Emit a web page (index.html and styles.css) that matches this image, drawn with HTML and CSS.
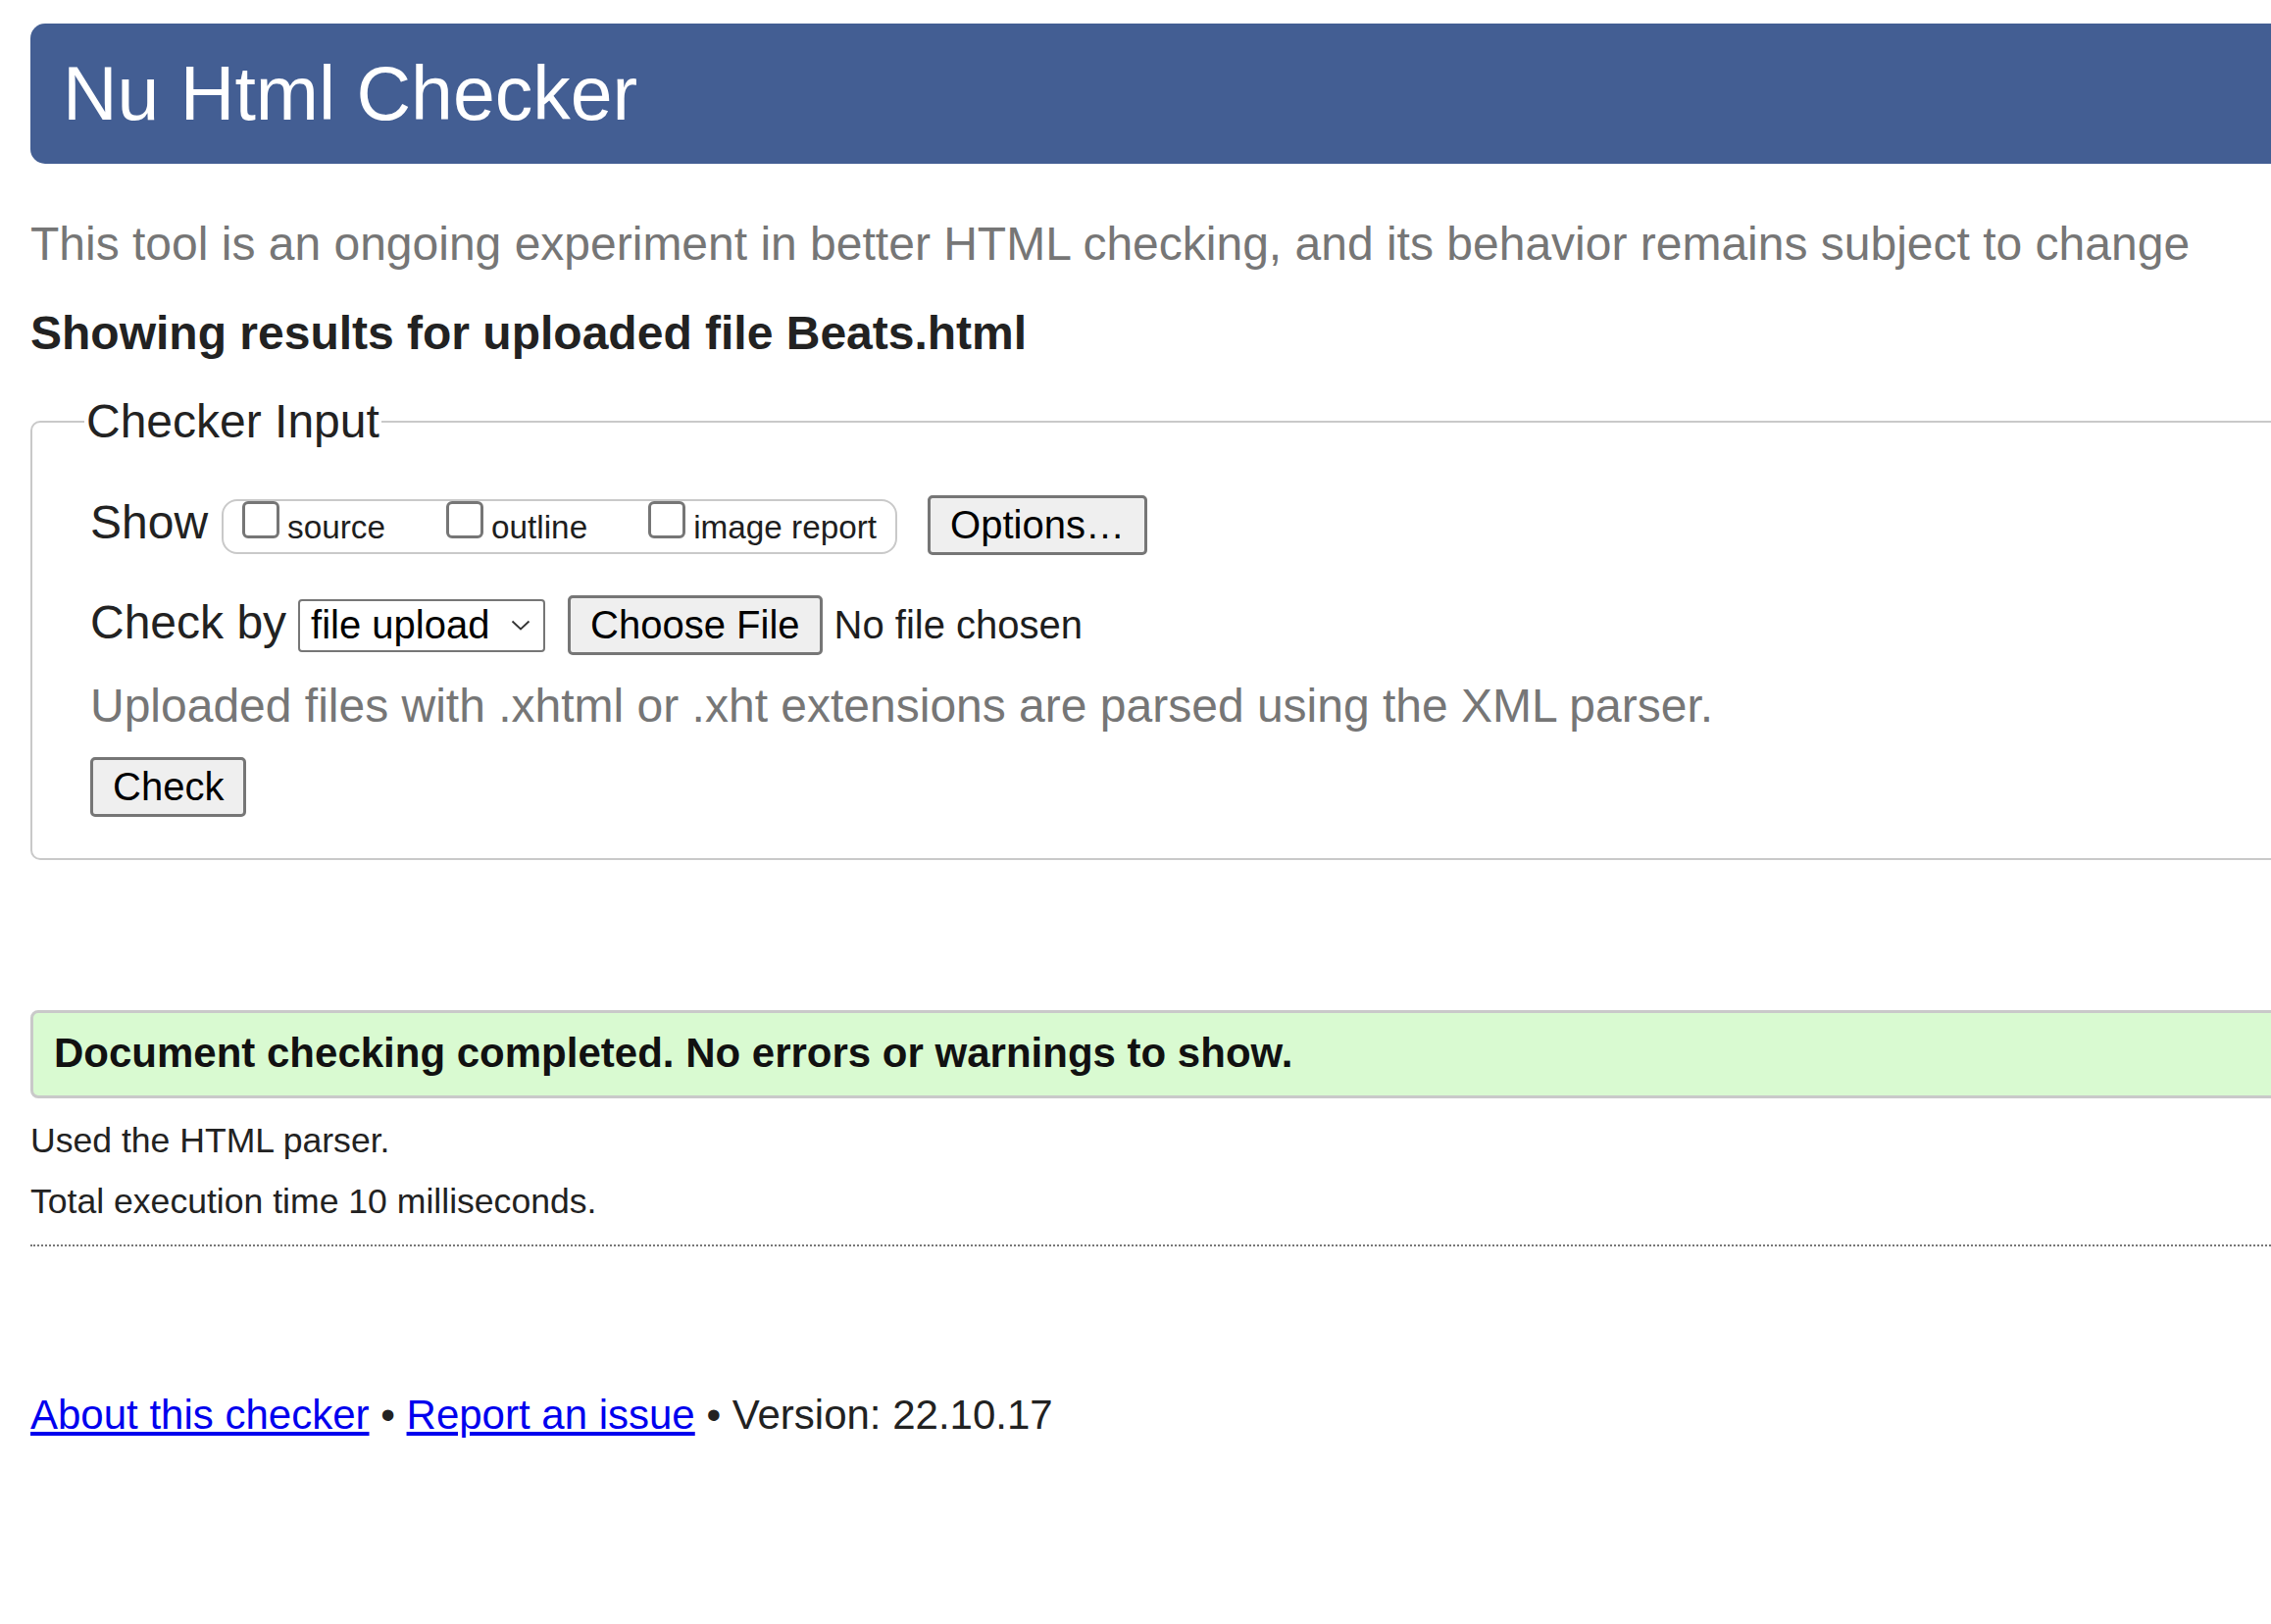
FILE: index.html
```html
<!DOCTYPE html>
<html lang="en">
<head>
<meta charset="utf-8">
<title>Nu Html Checker</title>
<link rel="stylesheet" href="styles.css">
</head>
<body>
<div class="page">
  <h1 class="title">Nu Html Checker</h1>
  <p class="intro">This tool is an ongoing experiment in better HTML checking, and its behavior remains subject to change</p>
  <h2 class="showing">Showing results for uploaded file Beats.html</h2>

  <fieldset class="checker">
    <legend>Checker Input</legend>
    <div class="fs-body">
      <div class="row">
        <span class="row-label">Show</span>
        <div class="group">
          <label class="opt"><input type="checkbox"><span>source</span></label>
          <label class="opt"><input type="checkbox"><span>outline</span></label>
          <label class="opt"><input type="checkbox"><span>image report</span></label>
        </div>
        <button class="btn btn-options" type="button">Options…</button>
      </div>
      <div class="row row2">
        <span class="row-label">Check by</span>
        <div class="select">
          <span>file upload</span>
          <svg class="chev" width="20" height="11" viewBox="0 0 20 11"><polyline points="1.5,1.5 10,9.5 18.5,1.5" fill="none" stroke="#333" stroke-width="1.8"/></svg>
        </div>
        <button class="btn btn-file" type="button">Choose File</button>
        <span class="nofile">No file chosen</span>
      </div>
      <p class="note">Uploaded files with .xhtml or .xht extensions are parsed using the XML parser.</p>
      <button class="btn btn-check" type="button">Check</button>
    </div>
  </fieldset>

  <div class="success">Document checking completed. No errors or warnings to show.</div>
  <p class="meta meta1">Used the HTML parser.</p>
  <p class="meta meta2">Total execution time 10 milliseconds.</p>
  <hr class="dotted">

  <p class="footer"><a href="#">About this checker</a> • <a href="#">Report an issue</a> • Version: 22.10.17</p>
</div>
</body>
</html>
```

FILE: styles.css
```css
html {
  background: #ffffff;
}

body {
  margin: 0;
  overflow-x: hidden;
  font-family: "Liberation Sans", Arial, sans-serif;
  color: #222222;
}

.page {
  margin: 24px -80px 0 31px;
}

.title {
  margin: 0;
  padding: 27px 32px 27px 33px;
  background: #435e93;
  color: #ffffff;
  font-size: 77px;
  font-weight: normal;
  line-height: normal;
  border-radius: 15px 0 0 15px;
}

.intro {
  margin: 54px 0 0 0;
  font-size: 48px;
  color: #767676;
  white-space: nowrap;
}

.showing {
  margin: 36px 0 0 0;
  font-size: 48px;
  font-weight: bold;
  color: #222222;
}

.checker {
  margin: 35px 0 0 0;
  padding: 48px 0 42px 53px;
  border: 2px solid #c9c9c9;
  border-radius: 10px;
  min-inline-size: 0;
}

.checker legend {
  padding: 0 2px;
  font-size: 48px;
  color: #222222;
}

.fs-body {
  padding-left: 6px;
}

.row {
  display: flex;
  align-items: baseline;
}

.row-label {
  font-size: 48px;
  color: #222222;
}

.group {
  display: flex;
  align-items: baseline;
  gap: 62px;
  margin-left: 14px;
  padding: 0 19px 6px 19px;
  border: 2px solid #c9c9c9;
  border-radius: 16px;
}

.opt {
  display: flex;
  align-items: baseline;
  gap: 8px;
  font-size: 33.3px;
  color: #1e1e1e;
}

.opt input {
  appearance: none;
  -webkit-appearance: none;
  box-sizing: border-box;
  width: 38px;
  height: 38px;
  margin: 0;
  border: 3px solid #767676;
  border-radius: 6px;
  background: #ffffff;
}

.btn {
  font-family: "Liberation Sans", Arial, sans-serif;
  font-size: 40px;
  line-height: normal;
  color: #000000;
  background: #efefef;
  border: 3px solid #767676;
  border-radius: 5px;
  padding: 5px 20px;
  margin: 0;
}

.btn-options {
  margin-left: 31px;
}

.row2 {
  margin-top: 41px;
}

.select {
  display: flex;
  align-items: baseline;
  box-sizing: border-box;
  width: 252px;
  margin-left: 12px;
  padding: 2px 13px 3px 11px;
  border: 2px solid #767676;
  border-radius: 4px;
  font-size: 40px;
  color: #000000;
}

.select .chev {
  margin-left: auto;
  align-self: center;
}

.btn-file {
  margin-left: 23px;
}

.nofile {
  margin-left: 12px;
  font-size: 40px;
  color: #1e1e1e;
}

.note {
  margin: 24px 0 0 0;
  font-size: 48px;
  color: #767676;
}

.btn-check {
  margin-top: 25px;
  display: block;
}

.success {
  margin-top: 153px;
  padding: 17px 18px 19px 21px;
  border: 3px solid #c9c9c9;
  border-radius: 8px;
  background: #d9fad1;
  font-size: 42px;
  font-weight: bold;
  color: #111111;
}

.meta {
  margin: 0;
  font-size: 35.6px;
  color: #222222;
}

.meta1 {
  margin-top: 23px;
}

.meta2 {
  margin-top: 21px;
}

.dotted {
  margin: 23px 0 0 0;
  border: 0;
  border-top: 2px dotted #777777;
  height: 0;
}

.footer {
  margin: 148px 0 0 0;
  font-size: 42px;
  color: #222222;
}

.footer a {
  color: #0000ee;
  text-decoration: underline;
}
```
